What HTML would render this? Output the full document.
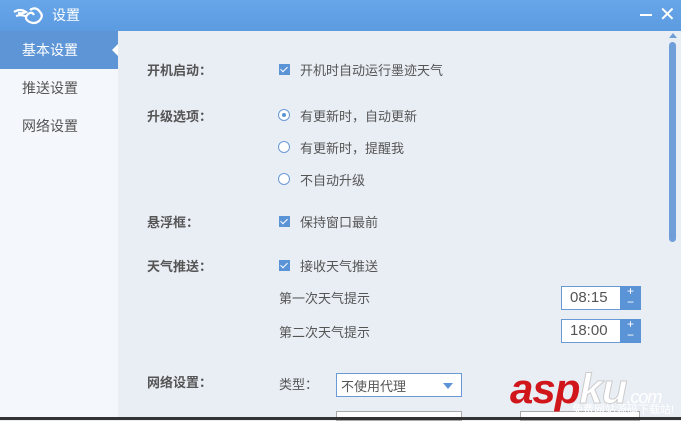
<!DOCTYPE html>
<html><head><meta charset="utf-8"><style>
*{margin:0;padding:0;box-sizing:border-box}
body{width:681px;height:420px;overflow:hidden;position:relative;background:#e9eef5;font-family:"Liberation Sans","Noto Sans CJK SC",sans-serif;font-size:13px;color:#555}
.t{position:absolute;white-space:nowrap}
#title{position:absolute;left:0;top:0;width:681px;height:31px;background:linear-gradient(#68a6ea,#5c9be0)}
#side{position:absolute;left:0;top:31px;width:118px;height:389px;background:#f4f7fb}
.sel{position:absolute;left:0;top:31px;width:118px;height:38px;background:#5d95d6}
.lab{font-weight:bold;color:#555}
.cb{position:absolute;width:11px;height:11px;background:#5b94d6}
.cb:after{content:"";position:absolute;left:3px;top:1px;width:3px;height:6px;border:solid #fff;border-width:0 1.5px 1.5px 0;transform:rotate(45deg)}
.rd{position:absolute;width:12px;height:12px;border:1px solid #6a9ad6;border-radius:50%;background:#fff}
.spin{position:absolute;width:80px;height:24px;border:1px solid #6a9ad6;background:#fff}
.spin span{position:absolute;left:8px;top:2px;font-size:15px;color:#555}
.spin b{position:absolute;right:-1px;top:-1px;width:21px;height:24px;background:#5b94d6;color:#fff;font-weight:normal;font-size:12px;line-height:11px;text-align:center}
</style></head><body>
<div id="title"></div>
<svg class="t" style="left:12px;top:6px" width="32" height="20" viewBox="0 0 32 20"><path d="M2 6 Q8 2 14 6 Q10 8 6 7 M4 10 Q10 8 15 11 M18 4 Q24 0 28 6 Q32 10 27 15 Q22 19 16 15 Q12 12 16 8 Q20 5 22 9" fill="none" stroke="#fff" stroke-width="2.2"/></svg>
<div class="t" style="left:52px;top:5px;color:#fff;font-size:14px">设置</div>
<div class="t" style="left:640px;top:14px;width:12px;height:2px;background:#fff"></div>
<div class="t" style="left:659px;top:5px;color:#fff;font-size:20px;line-height:20px">✕</div>
<div id="side"></div>
<div class="sel"></div>
<div class="t" style="left:112px;top:44px;width:0;height:0;border:6px solid transparent;border-right-color:#fff;border-left:0"></div>
<div class="t" style="left:22px;top:40px;color:#fff;font-size:14px">基本设置</div>
<div class="t" style="left:22px;top:78px;font-size:14px">推送设置</div>
<div class="t" style="left:22px;top:116px;font-size:14px">网络设置</div>

<div class="t lab" style="left:147px;top:60px">开机启动：</div>
<div class="cb" style="left:279px;top:64px"></div>
<div class="t" style="left:300px;top:60px">开机时自动运行墨迹天气</div>

<div class="t lab" style="left:147px;top:106px">升级选项：</div>
<div class="rd" style="left:278px;top:109px"><div style="position:absolute;left:3px;top:3px;width:4px;height:4px;border-radius:50%;background:#5b94d6"></div></div>
<div class="t" style="left:300px;top:106px">有更新时，自动更新</div>
<div class="rd" style="left:278px;top:141px"></div>
<div class="t" style="left:300px;top:138px">有更新时，提醒我</div>
<div class="rd" style="left:278px;top:173px"></div>
<div class="t" style="left:300px;top:170px">不自动升级</div>

<div class="t lab" style="left:147px;top:212px">悬浮框：</div>
<div class="cb" style="left:279px;top:216px"></div>
<div class="t" style="left:300px;top:212px">保持窗口最前</div>

<div class="t lab" style="left:147px;top:256px">天气推送：</div>
<div class="cb" style="left:279px;top:260px"></div>
<div class="t" style="left:300px;top:256px">接收天气推送</div>
<div class="t" style="left:279px;top:288px">第一次天气提示</div>
<div class="spin" style="left:561px;top:286px"><span>08:15</span><b>+<br>−</b></div>
<div class="t" style="left:279px;top:322px">第二次天气提示</div>
<div class="spin" style="left:561px;top:319px"><span>18:00</span><b>+<br>−</b></div>

<div class="t lab" style="left:147px;top:372px">网络设置：</div>
<div class="t" style="left:279px;top:374px">类型：</div>
<div class="t" style="left:336px;top:373px;width:126px;height:24px;border:1px solid #6a9ad6;background:#fff"><span style="position:absolute;left:4px;top:2px;color:#555">不使用代理</span><span style="position:absolute;right:8px;top:9px;border:5px solid transparent;border-top:6px solid #5b94d6;border-bottom:0"></span></div>
<div class="t" style="left:336px;top:411px;width:126px;height:10px;border:1px solid #aaa;background:#fff"></div>
<div class="t" style="left:520px;top:411px;width:120px;height:10px;border:1px solid #aaa;background:#fff"></div>

<div class="t" style="left:666px;top:31px;width:15px;height:389px;background:#e9eef5"></div>
<div class="t" style="left:669px;top:42px;width:7px;height:200px;border-radius:4px;background:#6f9ed8"></div>
<div class="t" style="left:669px;top:33px;border:4px solid transparent;border-bottom:5px solid #6f9ed8;border-top:0"></div>
<div class="t" style="left:510px;top:365px;font:italic bold 42px 'Liberation Sans',sans-serif;color:#d0161b;letter-spacing:-1px">asp<span style="color:#fff;-webkit-text-stroke:1px #ccc">ku</span><span style="font-size:18px;color:#fff;font-weight:normal">.com</span></div>
<div class="t" style="left:572px;top:401px;font-size:11px;color:#fff">免费网站源码下载站!</div>
<div class="t" style="left:0;top:417px;width:681px;height:3px;background:#333"></div>
</body></html>
